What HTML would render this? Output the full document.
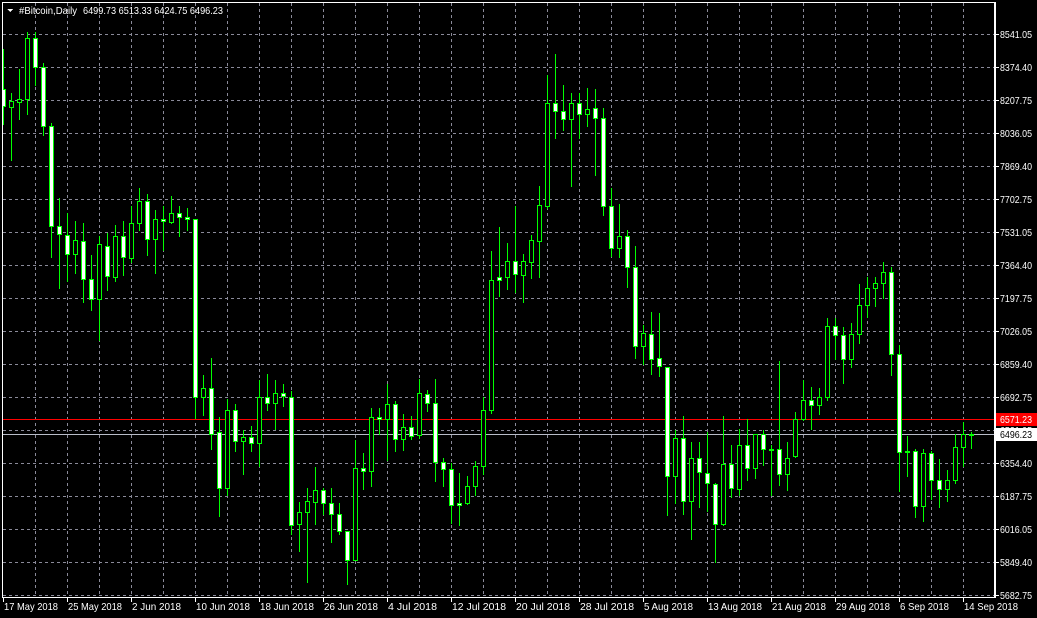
<!DOCTYPE html>
<html><head><meta charset="utf-8"><style>
html,body{margin:0;padding:0;background:#000;width:1037px;height:618px;overflow:hidden}
svg{display:block}
text{font-family:"Liberation Sans",sans-serif;font-size:10.5px;fill:#fff}
</style></head><body>
<svg id="s" width="1037" height="618" xmlns="http://www.w3.org/2000/svg" shape-rendering="crispEdges"></svg>
<script>
var d=[[0,225,268,125,315],[1,255,272,237,407],[1,252,258,175,303],[1,97,252,80,288],[0,97,171,80,215],[0,171,320,160,342],[0,320,574,312,651],[0,574,594,503,730],[0,597,645,540,712],[1,609,645,560,692],[0,612,708,566,765],[0,708,759,647,786],[1,620,759,599,862],[0,623,701,591,735],[1,599,704,571,714],[0,599,653,561,697],[1,566,654,523,665],[1,511,567,477,584],[0,511,607,492,646],[1,556,607,532,692],[0,556,561,522,635],[1,541,562,497,565],[0,541,551,522,600],[0,551,556,528,584],[0,556,1008,556,1060],[1,985,1006,951,1052],[0,985,1100,907,1138],[0,1097,1239,1057,1308],[1,1039,1239,1013,1257],[0,1039,1120,1024,1143],[1,1109,1120,1092,1202],[0,1109,1125,1082,1143],[1,1006,1125,965,1183],[0,1006,1022,949,1039],[1,996,1022,965,1089],[0,996,1005,975,1031],[0,1006,1333,992,1355],[1,1298,1330,1274,1397],[1,1271,1300,1237,1477],[1,1242,1273,1186,1330],[0,1242,1275,1237,1305],[0,1275,1305,1237,1375],[0,1305,1346,1276,1355],[0,1346,1420,1346,1481],[1,1188,1420,1116,1420],[0,1188,1196,1150,1240],[1,1059,1196,1035,1232],[0,1059,1062,1035,1100],[1,1026,1062,974,1167],[0,1026,1114,1018,1145],[1,1084,1114,1050,1142],[0,1084,1106,1055,1113],[1,998,1104,961,1110],[0,1000,1023,990,1042],[0,1023,1173,962,1220],[0,1173,1190,1163,1232],[0,1190,1282,1175,1327],[0,1275,1282,1200,1331],[1,1234,1276,1208,1278],[1,1183,1234,1170,1255],[1,1039,1183,1007,1202],[1,711,1039,637,1049],[0,704,711,576,750],[1,661,704,617,733],[0,663,696,522,742],[1,663,697,644,765],[1,610,664,597,705],[1,521,612,472,702],[1,262,522,191,528],[0,262,282,137,349],[0,282,302,216,329],[1,262,302,236,473],[0,262,288,236,349],[1,277,288,222,319],[0,275,300,226,443],[0,300,523,273,545],[0,523,630,478,650],[1,599,630,518,652],[0,599,678,584,727],[0,678,878,624,907],[1,845,878,825,923],[0,848,910,792,948],[0,909,929,794,953],[0,932,1208,932,1306],[1,1110,1208,1090,1275],[0,1110,1272,1055,1303],[1,1161,1272,1121,1368],[0,1161,1198,1121,1285],[0,1200,1226,1096,1296],[0,1229,1330,1225,1426],[1,1178,1330,1055,1333],[0,1178,1238,1129,1262],[1,1128,1241,1088,1257],[0,1128,1188,1062,1217],[1,1100,1188,1100,1212],[0,1100,1140,1090,1180],[1,1140,1142,1130,1257],[0,1140,1203,915,1230],[1,1161,1203,1121,1242],[1,1064,1158,1045,1160],[1,1015,1064,965,1065],[0,1016,1028,982,1089],[1,1008,1028,985,1050],[1,828,1008,808,1015],[0,828,850,808,912],[0,850,912,830,972],[1,848,912,820,930],[1,775,848,720,870],[1,731,775,703,803],[1,719,731,703,777],[1,690,719,665,755],[0,690,897,678,952],[0,899,1147,875,1245],[1,1145,1147,1105,1207],[0,1145,1283,1138,1311],[1,1148,1283,1140,1321],[0,1148,1218,1145,1265],[0,1217,1241,1165,1285],[1,1217,1241,1193,1272],[1,1135,1217,1100,1225],[1,1102,1135,1070,1183],[1,1100,1102,1095,1137]];
var K=2.537,h='';
function Y(v){return Math.round(v/K);}
function T(x,y,s,w,st){return '<text x="'+x+'" y="'+y+'" textLength="'+w+'" lengthAdjust="spacingAndGlyphs"'+(st?' style="'+st+'"':'')+'>'+s+'</text>';}
for(var k=0;k<18;k++){var y=Math.round(33.5+33.05*k)+0.5;h+='<line x1="3" x2="995" y1="'+y+'" y2="'+y+'" stroke="#8a8a99" stroke-dasharray="3,3"/>';}
for(var x=35;x<=963;x+=32){h+='<line x1="'+(x+0.5)+'" x2="'+(x+0.5)+'" y1="3" y2="597" stroke="#8a8a99" stroke-dasharray="3,3"/>';}
h+='<line x1="3" x2="995" y1="419.5" y2="419.5" stroke="#ff0000"/>';
h+='<line x1="3" x2="995" y1="434.5" y2="434.5" stroke="#b8bcc8"/>';
for(var i=0;i<d.length;i++){var c=d[i],cx=3+8*i;var bt=Y(c[1]),bb=Y(c[2]),wt=Y(c[3]),wb=Y(c[4]);if(bb<=bt)bb=bt+1;
h+='<line x1="'+(cx+0.5)+'" x2="'+(cx+0.5)+'" y1="'+wt+'" y2="'+(wb+1)+'" stroke="#00ff00"/>';
h+='<rect x="'+(cx-1.5)+'" y="'+(bt+0.5)+'" width="4" height="'+(bb-bt)+'" fill="'+(c[0]?'#000':'#fff')+'" stroke="#00ff00"/>';}
h+='<rect x="0" y="0" width="3" height="618" fill="#000"/>';
h+='<rect x="2.5" y="2.5" width="992" height="595" fill="none" stroke="#fff"/>';
h+='<rect x="996" y="0" width="41" height="618" fill="#000"/><line x1="995.5" x2="995.5" y1="2" y2="598" stroke="#fff"/>';
var P=['8541.05','8374.40','8207.75','8036.05','7869.40','7702.75','7531.05','7364.40','7197.75','7026.05','6859.40','6692.75','6521.05','6354.40','6187.75','6016.05','5849.40','5682.75'];
for(var k=0;k<18;k++){var y=Math.round(33.5+33.05*k);h+='<line x1="995" x2="999" y1="'+(y+0.5)+'" y2="'+(y+0.5)+'" stroke="#fff"/>'+T(1000,y+4,P[k],32);}
h+='<rect x="996" y="413" width="41" height="13" fill="#ff0000"/>'+T(1000,423,'6571.23',32);
h+='<rect x="996" y="428" width="41" height="13" fill="#fff"/>'+T(1000,438,'6496.23',32,'fill:#000');
var D=['17 May 2018','25 May 2018','2 Jun 2018','10 Jun 2018','18 Jun 2018','26 Jun 2018','4 Jul 2018','12 Jul 2018','20 Jul 2018','28 Jul 2018','5 Aug 2018','13 Aug 2018','21 Aug 2018','29 Aug 2018','6 Sep 2018','14 Sep 2018'];
for(var j=0;j<16;j++){var x=3+64*j;var w=Math.round(D[j].length*4.9);h+='<line x1="'+(x+0.5)+'" x2="'+(x+0.5)+'" y1="597" y2="602" stroke="#fff"/>'+T(x+1,610,D[j],w);}
h+='<polygon points="7,9 13,9 10,12" fill="#fff"/>'+T(19,14,'#Bitcoin,Daily',58)+T(83,14,'6499.73 6513.33 6424.75 6496.23',140);
document.getElementById('s').innerHTML=h;
</script>
</body></html>
